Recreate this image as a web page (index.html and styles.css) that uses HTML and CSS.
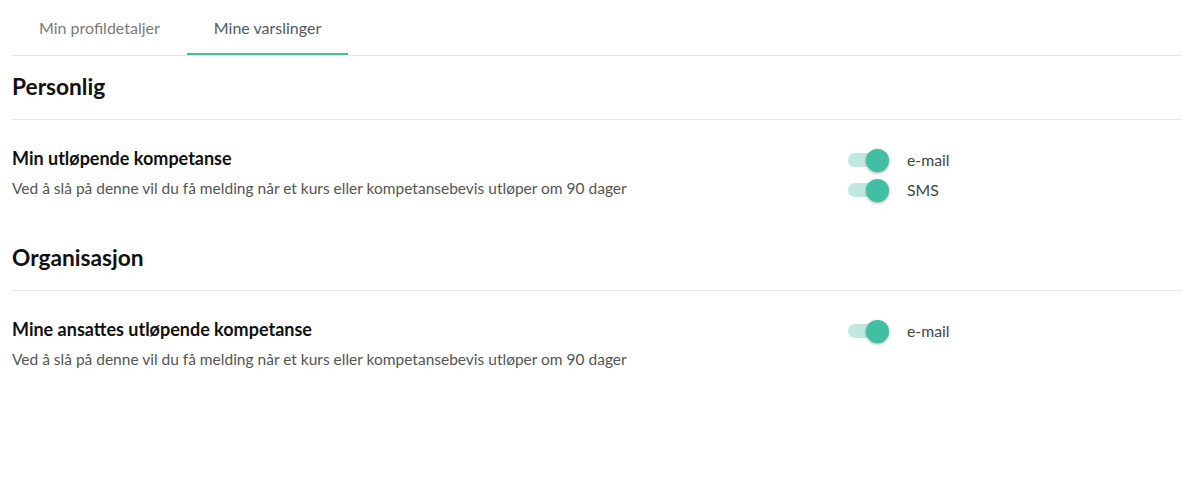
FILE: index.html
```html
<!DOCTYPE html>
<html lang="no">
<head>
<meta charset="utf-8">
<title>Mine varslinger</title>
<link rel="stylesheet" href="styles.css">
</head>
<body>
<div class="page">
  <nav class="tabs">
    <a class="tab">Min profildetaljer</a>
    <a class="tab active">Mine varslinger</a>
  </nav>

  <section class="section">
    <h2 class="section-title">Personlig</h2>
    <div class="item">
      <div class="item-text">
        <h3 class="item-title">Min utløpende kompetanse</h3>
        <p class="item-desc">Ved å slå på denne vil du få melding når et kurs eller kompetansebevis utløper om 90 dager</p>
      </div>
      <div class="toggles">
        <label class="toggle-row"><span class="switch"><span class="knob"></span></span><span class="toggle-label">e-mail</span></label>
        <label class="toggle-row"><span class="switch"><span class="knob"></span></span><span class="toggle-label">SMS</span></label>
      </div>
    </div>
  </section>

  <section class="section">
    <h2 class="section-title">Organisasjon</h2>
    <div class="item">
      <div class="item-text">
        <h3 class="item-title">Mine ansattes utløpende kompetanse</h3>
        <p class="item-desc">Ved å slå på denne vil du få melding når et kurs eller kompetansebevis utløper om 90 dager</p>
      </div>
      <div class="toggles">
        <label class="toggle-row"><span class="switch"><span class="knob"></span></span><span class="toggle-label">e-mail</span></label>
      </div>
    </div>
  </section>
</div>
</body>
</html>
```

FILE: styles.css
```css
* { box-sizing: border-box; }

html, body {
  margin: 0;
  padding: 0;
  background: #ffffff;
}

body {
  font-family: Lato, "Open Sans", "Liberation Sans", sans-serif;
  color: #111;
}

.page {
  padding-left: 12px;
}

.tabs {
  display: flex;
  border-bottom: 1px solid #e6e6e6;
}

.tab {
  display: block;
  padding: 18px 27px 15px;
  font-size: 16px;
  line-height: 20px;
  color: #7b7b7b;
  border-bottom: 2px solid transparent;
  cursor: pointer;
}

.tab.active {
  color: #4f5b62;
  border-bottom-color: #41bfa3;
}

.section-title {
  margin: 0;
  padding: 16px 0 17px;
  font-size: 22.7px;
  line-height: 30px;
  font-weight: 700;
  color: #111;
  border-bottom: 1px solid #e8e8e8;
}

.item {
  display: flex;
  padding: 25px 0 22px;
}

.item-text {
  width: 836px;
  flex: none;
}

.item-title {
  margin: 0;
  font-size: 18px;
  line-height: 26px;
  font-weight: 700;
  color: #111;
}

.item-desc {
  margin: 6px 0 0;
  font-size: 15.5px;
  line-height: 22px;
  color: #555;
}

.toggles {
  display: flex;
  flex-direction: column;
}

.toggle-row {
  display: flex;
  align-items: center;
  height: 30px;
  cursor: pointer;
}

.switch {
  position: relative;
  display: block;
  width: 38px;
  height: 14px;
  border-radius: 7px;
  background: #bfe9de;
}

.knob {
  position: absolute;
  top: -4px;
  left: 18px;
  width: 23px;
  height: 23px;
  border-radius: 50%;
  background: #41bfa3;
  box-shadow: 0 1px 3px rgba(0, 0, 0, 0.35);
}

.toggle-label {
  margin-left: 21px;
  font-size: 15.8px;
  line-height: 20px;
  color: #444;
}
```
